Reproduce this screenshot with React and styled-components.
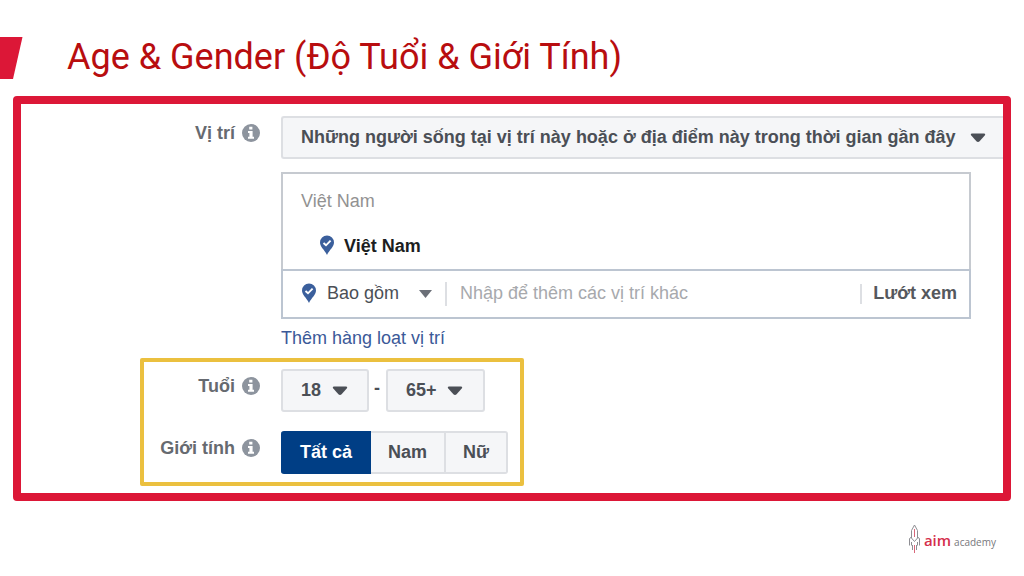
import React, { useState } from "react";
import styled, { createGlobalStyle, css } from "styled-components";

const GlobalStyle = createGlobalStyle`
  *, *::before, *::after { box-sizing: border-box; }
  body { margin: 0; background: #fff; }
`;

const Page = styled.main`
  font-family: "Liberation Sans", Arial, sans-serif;
  font-size: 18px;
  line-height: 22px;
  color: #4b4f56;
`;

const Header = styled.header`
  display: flex;
  align-items: center;
  gap: 44px;
  padding: 33px 0 15px;
`;

const Marker = styled.svg`
  display: block;
  flex: none;
  width: 23px;
  height: 43px;
`;

const Title = styled.h1`
  margin: 0;
  font: 400 36px/48px Roboto, sans-serif;
  color: #b80d0f;
`;

const Frame = styled.form`
  margin: 0 13px;
  padding: 12px 0 7px;
  border: 8px solid #dc1737;
  border-radius: 4px;
`;

const Row = styled.div`
  display: grid;
  grid-template-columns: ${(p) => p.$label}px minmax(0, 1fr);
  column-gap: 21px;
`;

const LabelCell = styled.div`
  display: flex;
  justify-content: flex-end;
  align-items: center;
  align-self: start;
  gap: 7px;
  padding-top: 6px;
  font-weight: 700;
  color: #666a70;
`;

const SelectWrap = styled.div`
  display: grid;
  align-items: center;
  width: ${(p) => (p.$width ? `${p.$width}px` : "auto")};

  > * {
    grid-area: 1 / 1;
  }
`;

const Select = styled.select`
  appearance: none;
  width: 100%;
  height: 43px;
  margin: 0;
  padding: 0 32px 2px 18px;
  border: 2px solid #dddfe3;
  border-radius: 3px;
  background: #f5f6f8;
  color: #4b4f56;
  font: inherit;
  font-weight: 700;
  ${(p) =>
    p.$bleed &&
    css`
      border-right: 0;
      border-radius: 3px 0 0 3px;
    `}
  ${(p) =>
    p.$plain &&
    css`
      height: 24px;
      padding: 0 32px 2px 0;
      border: 0;
      background: none;
      font-weight: 400;
    `}
`;

const Caret = styled.svg`
  justify-self: end;
  display: block;
  width: 16px;
  height: 10px;
  margin-right: ${(p) => p.$inset}px;
  pointer-events: none;
`;

const Locations = styled.div`
  margin: 13px 32px 0 0;
`;

const Chosen = styled.div`
  display: flex;
  flex-direction: column;
  gap: 23px;
  padding: 16px 18px 12px;
  border: 2px solid #c6cad0;
  border-bottom: 0;
`;

const Country = styled.div`
  color: #929292;
`;

const Place = styled.div`
  display: flex;
  align-items: center;
  gap: 9px;
  padding-left: 18px;
  font-weight: 700;
  color: #1c1e21;
`;

const Pin = styled.svg`
  display: block;
  flex: none;
  width: 16px;
  height: 22px;
`;

const SearchBar = styled.div`
  display: flex;
  align-items: center;
  height: 50px;
  padding: 0 12px 0 18px;
  border: 2px solid #bcc5d1;
`;

const Include = styled.div`
  flex: none;
  padding: 0 12px 0 10px;
`;

const Search = styled.input`
  flex: 1;
  min-width: 0;
  height: 24px;
  padding: 0 0 2px 13px;
  border: 0;
  border-left: 2px solid #dddfe3;
  background: none;
  font: inherit;
  color: #4b4f56;

  &::placeholder {
    color: #a7a9ad;
    opacity: 1;
  }
`;

const Browse = styled.button`
  height: 20px;
  margin: 0;
  padding: 0 0 2px 11px;
  border: 0;
  border-left: 2px solid #dddfe3;
  background: none;
  font: inherit;
  line-height: 18px;
  font-weight: 700;
  color: #55585d;
`;

const BulkLink = styled.a`
  display: block;
  width: max-content;
  margin: 8px 0 9px;
  color: #3b5998;
  text-decoration: none;
`;

const Highlight = styled.section`
  display: flex;
  flex-direction: column;
  gap: 19px;
  width: max-content;
  margin-left: 119px;
  padding: 7px 12px 8px 0;
  border: 4px solid #ebc03f;
  border-radius: 2px;
`;

const AgeRange = styled.div`
  display: flex;
  gap: 5px;
`;

const Dash = styled.span`
  padding: 8px 1px 0 0;
  font-weight: 700;
`;

const Segments = styled.div`
  display: flex;
`;

const Segment = styled.label`
  display: grid;
  place-items: center;
  height: 43px;
  padding: 0 17px 2px;
  border: 2px solid #dddfe3;
  border-left-width: 0;
  background: #f5f6f8;
  font-weight: 700;

  > * {
    grid-area: 1 / 1;
  }

  &:first-child {
    padding-left: 19px;
    border-radius: 3px 0 0 3px;
  }

  &:last-child {
    border-radius: 0 3px 3px 0;
  }

  &:has(:checked) {
    border-color: #003e85;
    background: #003e85;
    color: #fff;
  }
`;

const Radio = styled.input`
  appearance: none;
  width: 100%;
  height: 100%;
  margin: 0;
`;

const Footer = styled.footer`
  display: flex;
  justify-content: flex-end;
  padding: 23px 28px 0;
`;

const Logo = styled.div`
  display: flex;
  align-items: center;
  gap: 4px;
`;

const Rocket = styled.svg`
  display: block;
  width: 11px;
  height: 30px;
`;

const Wordmark = styled.span`
  display: flex;
  align-items: baseline;
  gap: 3px;
  padding-top: 3px;
  font: 400 10px/20px "Open Sans", sans-serif;
  color: #77777c;
`;

const Aim = styled.strong`
  font-size: 15px;
  font-weight: 600;
  color: #d52e4b;
`;

function CaretIcon({ inset = 0 }) {
  return (
    <Caret viewBox="0 0 16 10" $inset={inset} aria-hidden="true">
      <path d="M2 .5h12q2 .5.7 2L9.600 8.300Q8 9.600 6.400 8.300L1.300 2.500Q0 1 2 .5Z" fill="#4b4f56" />
    </Caret>
  );
}

function IncludeCaret() {
  return (
    <Caret viewBox="0 0 16 10" $inset={0} aria-hidden="true">
      <path d="M2 1h13L8.500 9Z" fill="#6b6f78" />
    </Caret>
  );
}

function PinIcon() {
  return (
    <Pin viewBox="0 0 16 22" aria-hidden="true">
      <path d="M8 .5A7 7 0 0 1 15 7.500C15 12 10.500 14.600 8 20 5.500 14.600 1 12 1 7.500A7 7 0 0 1 8 .5Z" fill="#3b5f9c" />
      <path d="m4.500 8 2.500 2.300 4.600-4.600" fill="none" stroke="#fff" strokeWidth="1.900" />
    </Pin>
  );
}

function InfoIcon() {
  return (
    <svg width="18" height="18" viewBox="0 0 18 18" aria-hidden="true">
      <circle cx="9" cy="9" r="9" fill="#8d949e" />
      <path d="M7.200 2.800h3.200v2.800H7.200ZM6 7h4.600v5.700H12v2H6v-2h1.400V9H6Z" fill="#fff" />
    </svg>
  );
}

function FieldLabel({ as, htmlFor, id, children }) {
  const Tag = as || "label";
  return (
    <LabelCell>
      <Tag htmlFor={htmlFor} id={id}>{children}</Tag>
      <InfoIcon />
    </LabelCell>
  );
}

const GENDERS = ["Tất cả", "Nam", "Nữ"];

export default function App() {
  const [gender, setGender] = useState(GENDERS[0]);

  return (
    <Page>
      <GlobalStyle />
      <Header>
        <Marker viewBox="0 0 23 43" aria-hidden="true">
          <path d="M0 1h22.500L13 43H0Z" fill="#dc1737" />
        </Marker>
        <Title>Age &amp; Gender (Độ Tuổi &amp; Giới Tính)</Title>
      </Header>

      <Frame>
        <Row $label={239}>
          <FieldLabel htmlFor="location">Vị trí</FieldLabel>
          <div>
            <SelectWrap>
              <Select id="location" $bleed>
                <option>Những người sống tại vị trí này hoặc ở địa điểm này trong thời gian gần đây</option>
              </Select>
              <CaretIcon inset={17} />
            </SelectWrap>
            <Locations>
              <Chosen>
                <Country>Việt Nam</Country>
                <Place>
                  <PinIcon />
                  Việt Nam
                </Place>
              </Chosen>
              <SearchBar>
                <PinIcon />
                <Include>
                  <SelectWrap $width={106}>
                    <Select $plain aria-label="Bao gồm">
                      <option>Bao gồm</option>
                    </Select>
                    <IncludeCaret />
                  </SelectWrap>
                </Include>
                <Search aria-label="Vị trí khác" placeholder="Nhập để thêm các vị trí khác" />
                <Browse type="button">Lướt xem</Browse>
              </SearchBar>
            </Locations>
            <BulkLink href="#bulk">Thêm hàng loạt vị trí</BulkLink>
          </div>
        </Row>

        <Highlight>
          <Row $label={116}>
            <FieldLabel htmlFor="age-min">Tuổi</FieldLabel>
            <AgeRange>
              <SelectWrap $width={88}>
                <Select id="age-min">
                  <option>18</option>
                </Select>
                <CaretIcon inset={21} />
              </SelectWrap>
              <Dash>-</Dash>
              <SelectWrap $width={99}>
                <Select aria-label="Tuổi tối đa">
                  <option>65+</option>
                </Select>
                <CaretIcon inset={22} />
              </SelectWrap>
            </AgeRange>
          </Row>
          <Row $label={116}>
            <FieldLabel as="span" id="gender">Giới tính</FieldLabel>
            <Segments role="radiogroup" aria-labelledby="gender">
              {GENDERS.map((name) => (
                <Segment key={name}>
                  <Radio
                    type="radio"
                    name="gender"
                    checked={gender === name}
                    onChange={() => setGender(name)}
                  />
                  <span>{name}</span>
                </Segment>
              ))}
            </Segments>
          </Row>
        </Highlight>
      </Frame>

      <Footer>
        <Logo>
          <Rocket viewBox="0 0 11 30" fill="none" aria-hidden="true">
            <path
              d="M2.500 14V6.500L5.500 1l3 5.500V14M.5 21.500V14.500l1.500-1 3.500 4 3.500-4 1.500 1v7M2.500 18v3.500M8.500 18v3.500M3.500 21v5M7.500 21v5"
              stroke="#8e8e93"
            />
            <path d="M5.500 5v8M5.500 21v8" stroke="#d9677a" />
          </Rocket>
          <Wordmark>
            <Aim>aim</Aim>academy
          </Wordmark>
        </Logo>
      </Footer>
    </Page>
  );
}
